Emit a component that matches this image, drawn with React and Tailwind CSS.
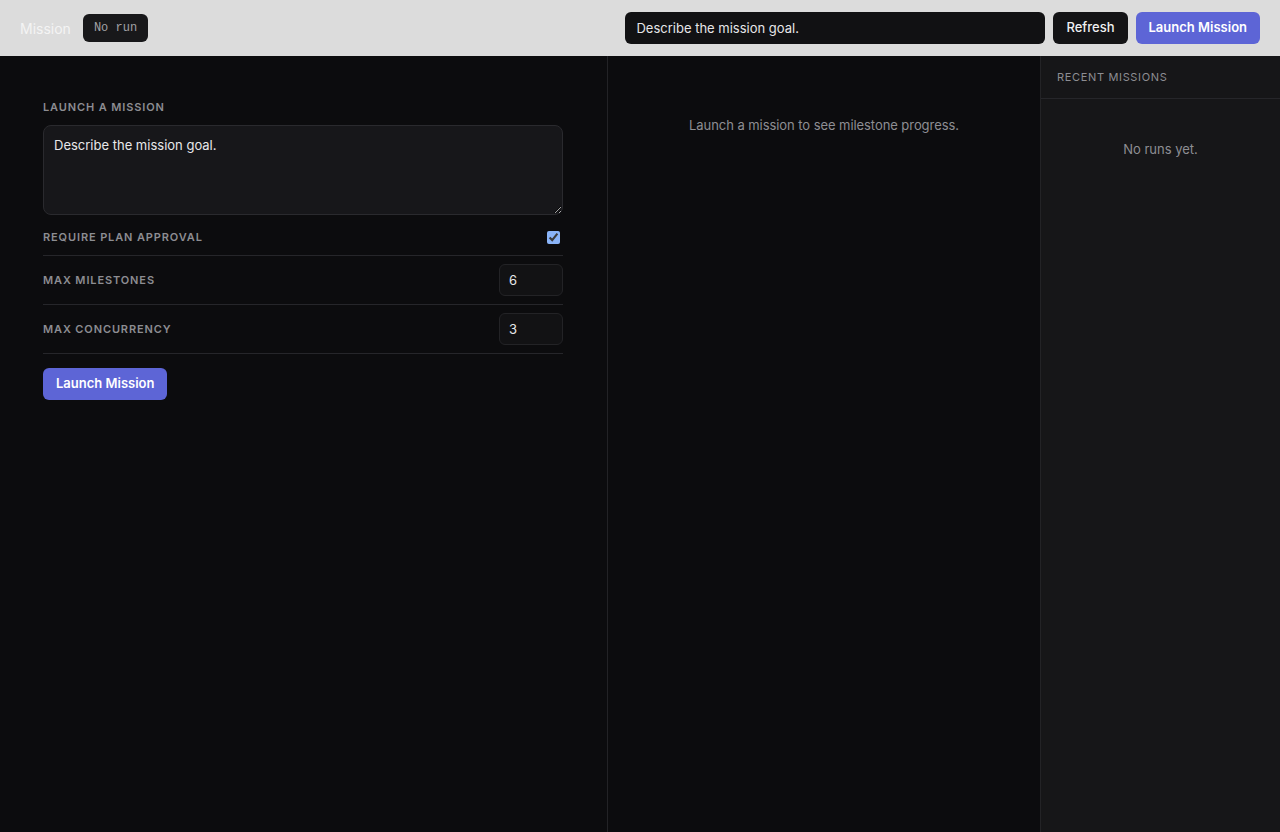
import React, { useState } from "react";

const App = () => {
  const [goal, setGoal] = useState("");
  const [requireApproval, setRequireApproval] = useState(true);
  const [maxMilestones, setMaxMilestones] = useState(6);
  const [maxConcurrency, setMaxConcurrency] = useState(3);

  return (
    <div
      className="h-[832px] w-[1280px] flex flex-col bg-[#0c0c0e] overflow-hidden"
      style={{ fontFamily: "Inter, 'Noto Sans', sans-serif" }}
    >
      {/* Top bar */}
      <header className="h-[56px] shrink-0 flex items-center justify-between bg-[#dcdcdc] pl-[20px] pr-[20px]">
        <div className="flex items-center gap-[12px]">
          <span className="text-[14px] text-[#f4f4f4]">Mission</span>
          <span
            className="h-[28px] px-[11px] flex items-center rounded-md bg-[#18181a] text-[12px] text-[#a0a0a4]"
            style={{ fontFamily: "'Liberation Mono', 'DejaVu Sans Mono', monospace" }}
          >
            No run
          </span>
        </div>
        <div className="flex items-center gap-2">
          <input
            value={goal}
            onChange={(e) => setGoal(e.target.value)}
            placeholder="Describe the mission goal."
            className="w-[420px] h-[32px] rounded-md bg-[#111113] px-[11px] text-[13px] text-[#e6e6e8] placeholder:text-[#e6e6e8] outline-none"
          />
          <button className="h-[32px] px-[13px] rounded-md bg-[#141416] text-[13px] font-medium text-[#f0f0f2]">
            Refresh
          </button>
          <button className="h-[32px] px-[13px] rounded-md bg-[#5d65d6] text-[13px] font-semibold text-white">
            Launch Mission
          </button>
        </div>
      </header>

      <div className="flex flex-1 min-h-0">
        {/* Launch form */}
        <section className="w-[608px] shrink-0 border-r border-[#232326] px-[43px] pt-[44px]">
          <h2 className="text-[11px] font-semibold tracking-[0.08em] uppercase text-[#8d8d92] leading-[14px]">
            Launch a Mission
          </h2>
          <textarea
            value={goal}
            onChange={(e) => setGoal(e.target.value)}
            placeholder="Describe the mission goal."
            className="mt-[11px] block w-[520px] h-[90px] rounded-lg border border-[#2a2a2e] bg-[#17171a] px-[10px] py-[10px] text-[13px] text-[#e8e8ea] placeholder:text-[#e8e8ea] outline-none resize-y"
          />
          <div className="w-[520px] mt-[11px]">
            <div className="flex items-center justify-between h-[30px] border-b border-[#26262a] pb-[6px]">
              <span className="text-[11px] font-semibold tracking-[0.08em] uppercase text-[#8d8d92]">
                Require plan approval
              </span>
              <input
                type="checkbox"
                checked={requireApproval}
                onChange={(e) => setRequireApproval(e.target.checked)}
                className="w-[13px] h-[13px] mr-[3px] accent-[#8ab4f8]"
              />
            </div>
            <div className="flex items-center justify-between h-[49px] border-b border-[#26262a]">
              <span className="text-[11px] font-semibold tracking-[0.08em] uppercase text-[#8d8d92]">
                Max milestones
              </span>
              <input
                type="number"
                value={maxMilestones}
                onChange={(e) => setMaxMilestones(e.target.value)}
                className="w-[64px] h-[32px] rounded-md border border-[#232326] bg-[#121214] px-[9px] text-[13px] text-[#e8e8ea] outline-none [appearance:textfield]"
              />
            </div>
            <div className="flex items-center justify-between h-[49px] border-b border-[#26262a]">
              <span className="text-[11px] font-semibold tracking-[0.08em] uppercase text-[#8d8d92]">
                Max concurrency
              </span>
              <input
                type="number"
                value={maxConcurrency}
                onChange={(e) => setMaxConcurrency(e.target.value)}
                className="w-[64px] h-[32px] rounded-md border border-[#232326] bg-[#121214] px-[9px] text-[13px] text-[#e8e8ea] outline-none [appearance:textfield]"
              />
            </div>
          </div>
          <button className="mt-[14px] h-[32px] px-[13px] rounded-md bg-[#5d65d6] text-[13px] font-semibold text-white">
            Launch Mission
          </button>
        </section>

        {/* Milestone progress */}
        <section className="w-[433px] shrink-0 border-r border-[#232326] pt-[60px] text-center">
          <p className="text-[13px] text-[#8e8e93] tracking-[-0.005em]">
            Launch a mission to see milestone progress.
          </p>
        </section>

        {/* Recent missions */}
        <aside className="flex-1 bg-[#161618]">
          <div className="h-[43px] flex items-center px-[16px] border-b border-[#26262a]">
            <span className="text-[11px] tracking-[0.06em] uppercase text-[#8d8d92]">
              Recent Missions
            </span>
          </div>
          <p className="pt-[41px] text-center text-[13px] text-[#8e8e93]">No runs yet.</p>
        </aside>
      </div>
    </div>
  );
};

export default App;
